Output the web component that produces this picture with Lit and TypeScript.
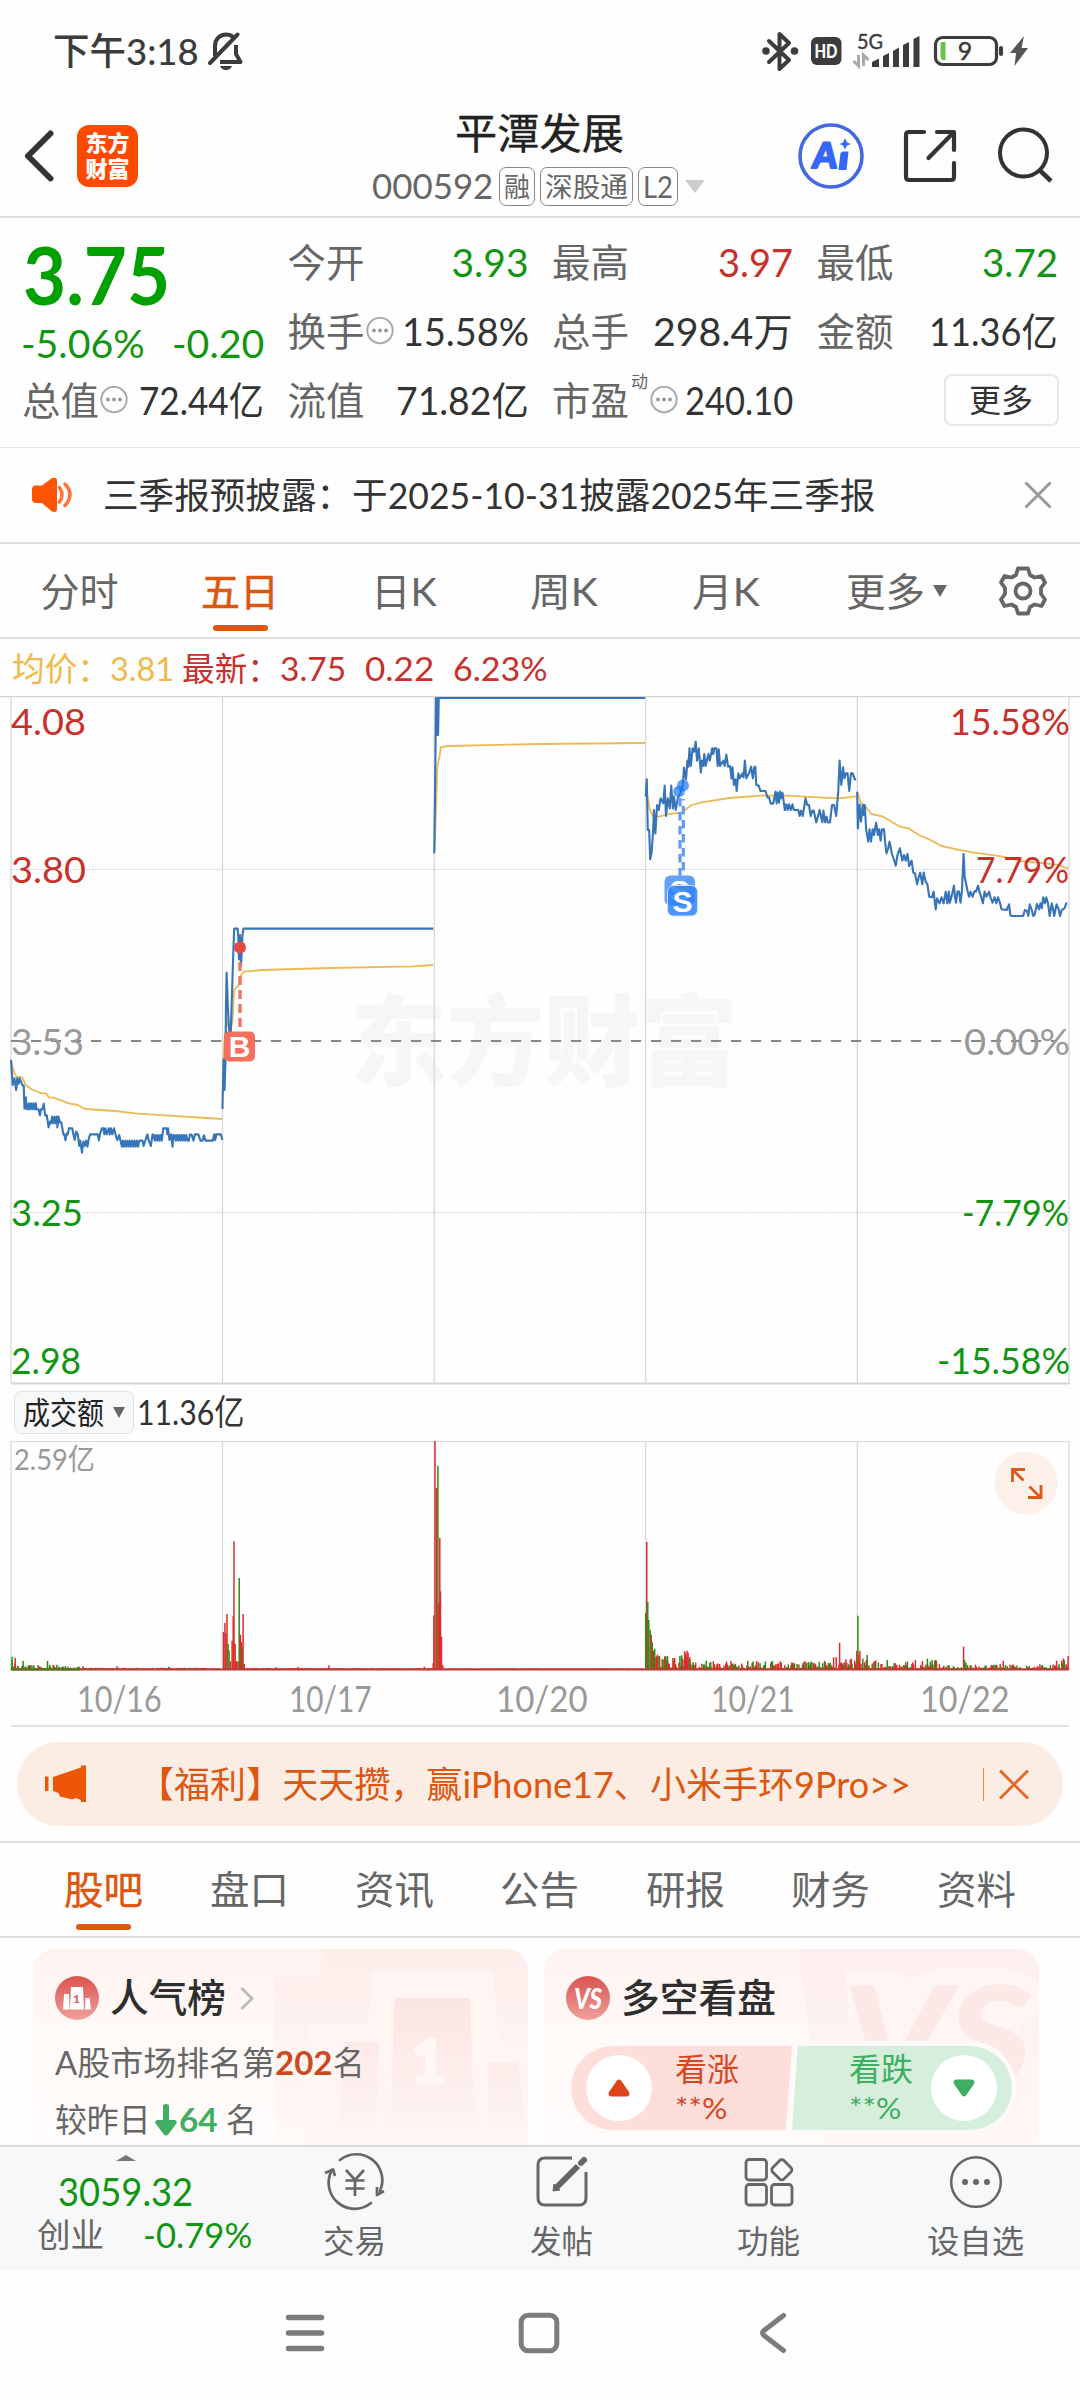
import { LitElement, html, css, svg } from "lit";
import { customElement, property, state } from "lit/decorators.js";
import { classMap } from "lit/directives/class-map.js";

/** One line of text squeezed or stretched horizontally to a given advance width. */
@customElement("fit-text")
class FitText extends LitElement {
  @property({ type: Number }) w = 100;
  @state() private k = 1;
  static styles = css`
    :host { display: inline-block; flex: none; white-space: pre; }
    .box { display: flex; }
    .run { display: inline-block; flex: none; transform-origin: 0 50%; }
  `;
  firstUpdated() {
    const run = this.renderRoot.querySelector(".run") as HTMLElement;
    if (run.offsetWidth) this.k = this.w / run.offsetWidth;
  }
  render() {
    return html`<span class="box" style="width:${this.w}px"><span class="run" style="transform:scaleX(${this.k})"><slot></slot></span></span>`;
  }
}

/* ---------- status bar ---------- */
@customElement("status-bar")
class StatusBar extends LitElement {
  static styles = css`
    :host { display: flex; height: 95px; box-sizing: border-box; padding: 7px 50px 0 53px; align-items: center; color: #3c3c3c; }
    .time { font-size: 37px; line-height: 44px; font-weight: 500; margin-right: 9px; }
    .grow { flex: 1; }
    svg { display: block; flex: none; }
    .t { font-family: Lato, "Liberation Sans", sans-serif; }
  `;
  render() {
    return html`
      <fit-text class="time" w="146">下午3:18</fit-text>
      <svg width="36" height="40" viewBox="0 0 36 40" fill="none" stroke="#3c3c3c" stroke-width="4">
        <path d="M7 25V15C7 8 12 3.500 18 3.500C21 3.500 23.500 4.500 25 6M28 14V23L32.500 31H12" stroke-linejoin="round"/>
        <path d="M2 32L29.500 3.500" stroke-linecap="round"/>
        <path d="M12 35H24C22.500 38.500 20 39 18 39S13.500 38.500 12 35Z" fill="#3c3c3c" stroke="none"/>
      </svg>
      <span class="grow"></span>
      <svg width="270" height="44" viewBox="760 29 270 44" fill="none" stroke="#3c3c3c">
        <path d="M769 41L789 60L779.500 69V34L789 43L769 62" stroke-width="4" stroke-linejoin="round" stroke-linecap="round"/>
        <circle cx="766" cy="51" r="3.800" fill="#3c3c3c" stroke="none"/><circle cx="794.500" cy="51" r="3.800" fill="#3c3c3c" stroke="none"/>
        <rect x="811" y="37" width="30.500" height="28" rx="6" fill="#3c3c3c" stroke="none"/>
        <text class="t" x="814.500" y="57.500" font-size="18" font-weight="900" textLength="23" lengthAdjust="spacingAndGlyphs" fill="#fff" stroke="none">HD</text>
        <text class="t" x="857" y="49" font-size="20.500" textLength="26" lengthAdjust="spacingAndGlyphs" fill="#3c3c3c" stroke="#3c3c3c" stroke-width=".4">5G</text>
        <path d="M858.500 55V66L853.500 61M863.500 66V55L868.500 60" stroke="#aaa" stroke-width="3"/>
        <g fill="#3c3c3c" stroke="none">
          <path d="M872 67V62L879 58.500V67ZM883 67V56L889 53V67ZM893 67V51L899 47.500V67ZM903 67V45L909 42V67ZM913.500 67V39L919.500 36V67Z"/>
          <rect x="999" y="46" width="4" height="10" rx="2"/>
          <path d="M1024 36L1010 53H1016L1014.500 66L1028 48H1021.500Z" fill="#555"/>
        </g>
        <rect x="935.500" y="37.500" width="61" height="27" rx="7" stroke-width="3.200"/>
        <path d="M941 42H945.500V60H943C941.500 60 940.500 58 940.500 56V46C940.500 44 940.500 43 941 42Z" fill="#6cc244" stroke="none"/>
        <text class="t" x="965" y="60" text-anchor="middle" font-size="25" fill="#3c3c3c" stroke="#3c3c3c" stroke-width=".5">9</text>
      </svg>`;
  }
}

/* ---------- title bar ---------- */
@customElement("title-bar")
class TitleBar extends LitElement {
  static styles = css`
    :host { display: grid; grid-template-columns: 372px 332px 1fr; height: 123px; box-sizing: border-box; border-bottom: 2px solid #dcdcdc; }
    .left { display: flex; align-items: center; padding: 0 0 0 24px; gap: 22px; }
    svg { display: block; flex: none; }
    .logo { width: 61px; height: 62px; border-radius: 12px; background: #ff4800; color: #fff; font-weight: 900; font-size: 22px; line-height: 26px; display: flex; flex-direction: column; align-items: center; justify-content: center; }
    .mid { display: flex; flex-direction: column; padding-top: 12px; }
    .name { font-size: 42px; line-height: 52px; color: #222; margin-left: 83px; -webkit-text-stroke: .3px #222; }
    .sub { display: flex; align-items: center; height: 40px; margin-top: 7px; color: #666; }
    .code { font-size: 34px; line-height: 38px; margin-right: 6px; }
    .tag { box-sizing: border-box; height: 39px; border: 1px solid #888; border-radius: 7px; font-size: 27px; line-height: 37px; padding: 0 4px; margin-right: 5px; }
    .tag.latin { font-size: 31px; }
    .tri { width: 0; border: 10px solid transparent; border-top: 13px solid #ccc; border-bottom: 0; margin-left: 2px; }
    .right { display: flex; align-items: center; padding-left: 94px; }
    .t { font-family: "Liberation Sans", Arial, sans-serif; }
  `;
  render() {
    return html`
      <div class="left">
        <svg width="31" height="54" viewBox="0 0 31 54" fill="none" stroke="#333" stroke-width="6" stroke-linecap="round" stroke-linejoin="round"><path d="M26.500 4.500L4 27L26.500 49.500"/></svg>
        <div class="logo"><fit-text w="44">东方</fit-text><fit-text w="44">财富</fit-text></div>
      </div>
      <div class="mid">
        <fit-text class="name" w="169">平潭发展</fit-text>
        <div class="sub">
          <fit-text class="code" w="121">000592</fit-text>
          <span class="tag"><fit-text w="26">融</fit-text></span>
          <span class="tag"><fit-text w="83">深股通</fit-text></span>
          <span class="tag latin"><fit-text w="30">L2</fit-text></span>
          <span class="tri"></span>
        </div>
      </div>
      <div class="right">
        <svg width="270" height="70" viewBox="798 121 270 70" fill="none" stroke="#333">
          <circle cx="831" cy="156" r="31" stroke="#4468e0" stroke-width="3.600"/>
          <text class="t" transform="translate(810.500 168) skewX(-6)" font-size="37" font-weight="700" fill="#3767f6" stroke="#3767f6" stroke-width="2" stroke-linejoin="round">A</text>
          <path d="M842.500 151.500H848.500L846.500 170H838.500L840.500 153Z" fill="#3767f6" stroke="none"/>
          <path d="M845 138L847 142.500L851 144L847 145.500L845 149.500L843 145.500L839.500 144L843 142.500Z" fill="#3767f6" stroke="none"/>
          <path d="M924 132H909Q906 132 906 135V177Q906 180 909 180H951Q954 180 954 177V163" stroke-width="4.200" stroke-linecap="round"/>
          <path d="M937 132H954V150M953 133L928.500 158" stroke-width="4.200" stroke-linecap="round" stroke-linejoin="round"/>
          <circle cx="1023.500" cy="153" r="23.500" stroke-width="4"/>
          <path d="M1040 170.500L1051 181" stroke-width="4.500"/>
        </svg>
      </div>`;
  }
}

/* ---------- quote statistics ---------- */
interface Stat { k: string; v: string; w: number; tone?: string; info?: boolean; sup?: string; }
@customElement("quote-stats")
class QuoteStats extends LitElement {
  static styles = css`
    :host { display: grid; grid-template-columns: 242px 241px 241px 241px; column-gap: 23.500px; grid-template-rows: 69px 69px 69px; height: 230px; box-sizing: border-box; padding: 9.500px 22px 0 22px; border-bottom: 1px solid #e6e6e6; color: #333; }
    .price { grid-row: 1 / span 2; display: flex; flex-direction: column; color: #00a000; }
    .last { font-size: 81px; font-weight: 700; line-height: 92px; margin-left: 1px; }
    .chg { display: flex; justify-content: space-between; font-size: 38px; line-height: 46px; color: #129512; margin-left: -1px; }
    .cell { display: flex; align-items: center; font-size: 39px; line-height: 60px; }
    .key { color: #666; font-size: 38.500px; }
    .val { margin-left: auto; }
    .sup { font-size: 17px; line-height: 20px; color: #666; align-self: flex-start; margin: 6px 2px 0 2px; }
    .info { margin-left: 1px; }
    .sup + .info { margin-left: 0; }
    .up { color: #c9302c; } .down { color: #129512; }
    .more { justify-self: end; align-self: center; margin-right: -1px; width: 115px; height: 52px; box-sizing: border-box; border: 2px solid #e7e7e7; border-radius: 8px; font-size: 32px; line-height: 47px; display: flex; justify-content: center; }
  `;
  private cells: Stat[] = [
    { k: "今开", v: "3.93", w: 77, tone: "down" }, { k: "最高", v: "3.97", w: 75, tone: "up" }, { k: "最低", v: "3.72", w: 76, tone: "down" },
    { k: "换手", v: "15.58%", w: 127, info: true }, { k: "总手", v: "298.4万", w: 140 }, { k: "金额", v: "11.36亿", w: 129 },
    { k: "总值", v: "72.44亿", w: 125, info: true }, { k: "流值", v: "71.82亿", w: 133 }, { k: "市盈", v: "240.10", w: 108, info: true, sup: "动" },
  ];
  render() {
    return html`
      <div class="price">
        <fit-text class="last" w="147">3.75</fit-text>
        <div class="chg"><fit-text w="124">-5.06%</fit-text><fit-text w="92">-0.20</fit-text></div>
      </div>
      ${this.cells.map((c) => html`
        <div class="cell">
          <fit-text class="key" w="77">${c.k}</fit-text>
          ${c.sup ? html`<fit-text class="sup" w="17">${c.sup}</fit-text>` : ""}
          ${c.info ? html`<svg class="info" width="28" height="28" viewBox="0 0 28 28"><circle cx="14" cy="13.500" r="12.700" fill="none" stroke="#aaa" stroke-width="2"/><g fill="#999"><circle cx="8" cy="13.500" r="1.900"/><circle cx="14" cy="13.500" r="1.900"/><circle cx="20" cy="13.500" r="1.900"/></g></svg>` : ""}
          <fit-text class="val ${c.tone ?? ""}" w=${c.w}>${c.v}</fit-text>
        </div>`)}
      <div class="more"><fit-text w="64">更多</fit-text></div>`;
  }
}

@customElement("notice-bar")
class NoticeBar extends LitElement {
  static styles = css`
    :host { display: flex; align-items: center; height: 96px; box-sizing: border-box; border-bottom: 2px solid #dcdcdc; padding: 0 28px 0 31px; color: #333; }
    .txt { font-size: 36px; line-height: 50px; margin-left: 30px; flex: 1; }
  `;
  render() {
    return html`
      <svg width="42" height="36" viewBox="31 477 42 36"><path d="M36 485.500H42L52 478Q57 476.500 57 481V509Q57 513 52 511.500L42 503H36Q32 503 32 499V489.500Q32 485.500 36 485.500Z" fill="#ff5500"/><path d="M59.500 487.500Q64.500 494.500 59.500 502M65 484Q75 494.500 65 505.500" fill="none" stroke="#ff7433" stroke-width="3.500" stroke-linecap="round"/></svg>
      <fit-text class="txt" w="772">三季报预披露：于2025-10-31披露2025年三季报</fit-text>
      <svg width="28" height="28" viewBox="0 0 28 28" stroke="#999" stroke-width="3"><path d="M1.500 1.500L26.500 26.500M26.500 1.500L1.500 26.500"/></svg>`;
  }
}

@customElement("period-tabs")
class PeriodTabs extends LitElement {
  static styles = css`
    :host { display: grid; grid-template-columns: 159px 162px 165px 155px 169px 149px 121px; height: 95px; box-sizing: border-box; border-bottom: 2px solid #dcdcdc; color: #666; font-size: 39px; line-height: 60px; }
    .tab { display: flex; flex-direction: column; align-items: center; padding-top: 17px; }
    .on { color: #dc560f; -webkit-text-stroke: .6px #dc560f; }
    .on::after { content: ""; width: 55px; height: 6px; border-radius: 3px; background: #dc560f; margin-top: 4px; }
    .more { flex-direction: row; align-items: flex-start; justify-content: center; gap: 8px; padding-left: 23px; }
    .tri { border: 7px solid transparent; border-top: 12px solid #666; border-bottom: 0; margin-top: 24px; }
    .gear { display: flex; padding: 21px 0 0 39px; }
  `;
  private tabs = [["分时", 78], ["五日", 78], ["日K", 66], ["周K", 68], ["月K", 68]] as const;
  @state() private active = "五日";
  render() {
    return html`
      ${this.tabs.map(([t, w]) => html`<div class=${classMap({ tab: true, on: t === this.active })} @click=${() => (this.active = t)}><fit-text w=${w}>${t}</fit-text></div>`)}
      <div class="tab more"><fit-text w="79">更多</fit-text><span class="tri"></span></div>
      <div class="gear"><svg width="50" height="52" viewBox="-25 -26 50 52" fill="none" stroke="#666" stroke-width="3.800" stroke-linejoin="round">
        <path d="M-5 -22.500H5L7 -16L11.500 -13.500L18.500 -15L22 -8.500L18 -3V3L22 8.500L18.500 15L11.500 13.500L7 16L5 22.500H-5L-7 16L-11.500 13.500L-18.500 15L-22 8.500L-18 3V-3L-22 -8.500L-18.500 -15L-11.500 -13.500L-7 -16Z"/><circle r="7.500"/></svg></div>`;
  }
}

/* ---------- chart data (sampled on a 2.904 x 3 grid per pixel) ---------- */
const zig = (x0: number, x1: number, a: number, b: number, step = 3.4) => {
  let s = "";
  for (let x = x0, i = 0; x < x1; x += step, i++) s += ` ${x.toFixed(1)},${i % 2 ? a : b}`;
  return s;
};
const DAY1 = "32,1110 37,1185 42,1165 47,1200 50,1165 54,1182 57,1165 66,1187 69,1187 71,1256 75,1222 77,1256" + zig(80, 104, 1240, 1258) +
  " 106,1258 112,1258 116,1276 119,1258 123,1258 127,1241 131,1276 136,1276 141,1312 145,1295" + zig(148, 170, 1280, 1300) + " 166,1312 170,1280 174,1297 178,1297 184,1333 187,1333 190,1351 194,1330 197,1333 200,1315 210,1315 213,1333 217,1350 221,1325 226,1333 230,1368 233,1352 238,1388 242,1355 246,1368 250,1352 254,1370 258,1345 262,1333 280,1333 284,1333 287,1351 291,1330 296,1315 300,1315 303,1333 306,1315 310,1333 316,1315 319,1333 322,1315 326,1333 331,1315 337,1340 341,1350 346,1335 350,1352 354,1370" +
  zig(357, 405, 1370, 1352) + " 405,1352 414,1352 417,1368 422,1352 428,1333 432,1352 438,1368 443,1333" + zig(446, 472, 1352, 1335) + " 474,1315 484,1315 486,1333 488,1315 492,1350 497,1333 501,1370 504,1335" + zig(507, 546, 1352, 1335) +
  " 548,1352 552,1333 557,1335 562,1352 566,1333 576,1333 582,1352 588,1352 592,1336 597,1352 618,1352 622,1333 625,1350 628,1333 641,1333 646,1350";
const DAY2 = "646,1257 649,1108 652,1200 655,1100 656,960 658,848 662,960 666,1030 670,1030 674,900 677,800 680,716 690,716 692,740 694,808 697,735 700,825 704,735 707,716 1258,716";
const DAY3 = "1261,490 1264,240 1266,24 1269,60 1270,135 1271,24 1272,135 1274,24 1873,24";
const DAY4 = "307,320 310,268 313,420 317,420 320,508 324,488 328,430 331,360 335,430 340,345 345,360 350,325 358,340 362,287 366,378 371,325 377,355 381,287 386,355 389,320 394,360 400,325 407,310 415,285 418,233 424,268 428,212 431,230 434,175 438,228 443,175 448,185 452,155 456,212 461,175 467,247 470,212 474,228 477,192 481,228 485,210 489,192 493,212 500,175 503,192 506,175 512,175 516,228 519,178 523,228 532,212 536,228 541,194 546,230 552,228 556,265 559,232 563,285 568,268 571,303 576,250 580,265 588,250 591,262 595,212 599,265 607,250 613,230 618,265 622,232 625,230 628,285 635,287 640,303 655,303 660,322 665,322 670,341 677,341 684,305 687,340 690,308 694,338 697,305 700,325 704,308 711,360 715,343 719,360 723,343 728,360 733,343 737,360 750,360 754,378 758,362 763,378 767,350 771,325 776,345 781,345 786,378 791,362 795,362 802,397 807,380 812,360 816,380 820,397 823,362 828,397 832,380 836,397 842,397 848,345 854,345 860,378 866,305 870,212 875,285 880,232 884,265 888,250 893,250 898,303 903,250 908,250 914,268 918,268";
const DAY5 = "921,305 923,415 928,343 932,395 937,345 940,375 943,345 947,418 953,455 957,418 961,455 966,418 970,435 976,398 981,435 985,418 989,452 993,418 999,418 1002,455 1006,490 1011,475 1015,455 1022,492 1028,510 1033,527 1038,495 1045,475 1052,512 1057,495 1062,512 1067,492 1072,528 1079,512 1084,548 1089,550 1095,583 1100,560 1104,548 1110,583 1114,548 1120,575 1125,583 1130,620 1138,622 1143,605 1149,658 1153,625 1160,640 1166,622 1172,640 1178,605 1183,640 1187,605 1190,638 1195,620 1202,587 1205,622 1208,638 1212,605 1217,605 1221,638 1225,605 1230,492 1233,560 1238,585 1242,605 1246,620 1250,605 1256,620 1262,603 1266,605 1272,587 1276,605 1281,620 1286,640 1291,605 1296,620 1304,605 1308,622 1314,638 1320,622 1325,640 1330,622 1336,640 1340,658 1355,660 1362,643 1366,676 1370,678 1403,678 1408,660 1414,662 1418,678 1422,643 1428,660 1432,678 1436,675 1443,642 1449,658 1453,640 1457,655 1461,622 1466,640 1470,622 1475,640 1480,678 1486,640 1490,658 1493,678 1500,643 1506,658 1510,678 1515,660 1523,655 1528,640 1531,640";
const AVG_L = [
  "32,1110 37,1135 47,1160 64,1162 75,1185 90,1197 120,1210 133,1210 142,1222 155,1223 200,1240 225,1245 248,1257 335,1263 400,1271 645,1287",
  "649,1110 652,1050 660,990 668,1030 675,995 680,900 694,885 700,855 709,845 760,840 960,834 1200,829 1258,825",
  "1262,480 1270,230 1276,200 1280,172 1300,168 1568,162 1873,159",
];
const AVG_R = [
  "309,300 318,355 327,378 345,380 375,372 410,368 425,357 440,345 470,337 550,324 640,317 720,317 820,323 870,325 919,319",
  "921,305 930,335 945,350 962,372 997,380 1045,410 1070,415 1100,435 1130,448 1165,468 1210,478 1260,488 1340,499 1400,513 1500,524 1533,535",
];
const COLS = [11, 222.5, 434.3, 645.6, 857.3, 1069];

@customElement("price-chart")
class PriceChart extends LitElement {
  static styles = css`
    :host { display: block; }
    .legend { display: flex; height: 57px; align-items: center; padding-left: 12px; font-size: 33px; line-height: 44px; color: #c9302c; }
    .avg { color: #efba48; }
    .g2 { margin-left: 8px; } .g3 { margin-left: 19px; }
    svg { display: block; }
    polyline { fill: none; vector-effect: non-scaling-stroke; stroke-linejoin: round; }
    .px { stroke: #3874b8; stroke-width: 2.1px; }
    .mean { stroke: #edb955; stroke-width: 1.800px; }
    .lbl { font-family: Lato, "Liberation Sans", sans-serif; font-size: 37.500px; }
    .up { fill: #c9302c; } .dn { fill: #129512; } .mid { fill: #999; }
    .wm { font-family: "Noto Sans CJK SC", sans-serif; font-weight: 900; font-size: 99px; fill: #f6f6f6; }
    .mk { font-family: "Liberation Sans", sans-serif; font-weight: 700; font-size: 30px; fill: #fff; text-anchor: middle; }
  `;
  private labels: [string, number, number, number, string][] = [
    ["4.08", 11, 735, 75, "up"], ["3.80", 11, 883, 75, "up"], ["3.53", 11, 1055, 73, "mid"], ["3.25", 11, 1226, 72, "dn"], ["2.98", 11, 1374, 70, "dn"],
    ["15.58%", 950, 735, 120, "up"], ["7.79%", 976, 883, 93, "up"], ["0.00%", 964, 1055, 106, "mid"], ["-7.79%", 962, 1226, 107, "dn"], ["-15.58%", 937, 1374, 133, "dn"],
  ];
  render() {
    return html`
      <div class="legend">
        <fit-text class="avg" w="98">均价：</fit-text><fit-text class="avg" w="64">3.81</fit-text>
        <fit-text class="g2" w="98">最新：</fit-text><fit-text w="66">3.75</fit-text>
        <fit-text class="g3" w="69">0.22</fit-text><fit-text class="g3" w="95">6.23%</fit-text>
      </div>
      <svg width="1080" height="690" viewBox="0 696 1080 690">
        <text class="wm" x="350" y="1078" textLength="388" lengthAdjust="spacingAndGlyphs">东方财富</text>
        <path d="M0 696.500H1080" stroke="#d4d4d4" stroke-width="1.500"/>
        <path d="M11 1383.500H1070" stroke="#d4d4d4" stroke-width="2"/>
        ${COLS.map((x) => svg`<path d="M${x} 697V1383" stroke="#d8d8d8" stroke-width="1.300"/>`)}
        <path d="M11 869.500H1069M11 1212.500H1069" stroke="#d0d0d0" stroke-width="1" stroke-dasharray="1.500 1.200"/>
        <path d="M11 1041H1057" stroke="#888" stroke-width="2" stroke-dasharray="10.200 9.800"/>
        <g transform="translate(0 690) scale(.34439 .33333)">
          ${AVG_L.map((p) => svg`<polyline class="mean" points=${p} />`)}
          ${[DAY1, DAY2, DAY3].map((p) => svg`<polyline class="px" points=${p} />`)}
        </g>
        <g transform="translate(540 690) scale(.34439 .33333)">
          ${AVG_R.map((p) => svg`<polyline class="mean" points=${p} />`)}
          ${[DAY4, DAY5].map((p) => svg`<polyline class="px" points=${p} />`)}
        </g>
        ${this.labels.map(([t, x, y, w, c]) => svg`<text class="lbl ${c}" x=${x} y=${y} textLength=${w} lengthAdjust="spacingAndGlyphs">${t}</text>`)}
        <circle cx="240" cy="947.500" r="6" fill="#e4483e"/>
        <path d="M240 962V1027" stroke="#f07462" stroke-width="3.400" stroke-dasharray="9 5"/>
        <rect x="224" y="1031.500" width="31" height="30" rx="5" fill="#f5705f"/>
        <text class="mk" x="239.500" y="1057" >B</text>
        <g fill="#1a75f5" fill-opacity=".7"><circle cx="679" cy="791.500" r="5.800"/><circle cx="683" cy="785.500" r="6"/></g>
        <path d="M680 798V876" stroke="#5f9df5" stroke-width="3.200" stroke-dasharray="8.500 5.500"/>
        <path d="M683.300 799V876" stroke="#5f9df5" stroke-width="3.200" stroke-dasharray="8.500 5.500" stroke-dashoffset="7"/>
        <rect x="664.500" y="875.500" width="30.500" height="30" rx="6" fill="#62a0f7"/>
        <text class="mk" x="679.500" y="901">S</text>
        <rect x="667.500" y="885.500" width="30" height="30.500" rx="6" fill="#2f83f8" fill-opacity=".85" stroke="#cfe2fd" stroke-width="1"/>
        <text class="mk" x="682.500" y="912">S</text>
      </svg>`;
  }
}

/* ---------- turnover bars ---------- */
type Bar = [number, number, "r" | "g"];
const BARS: Bar[] = (() => {
  const out: Bar[] = [];
  let seed = 29;
  const rnd = () => ((seed = (seed * 16807) % 2147483647) / 2147483647);
  const noise = (x0: number, x1: number, amp: (x: number) => number, red = 0.55) => {
    for (let x = x0; x < x1; x += 2.56) out.push([x, 4 + amp(x) * Math.pow(rnd(), 1.8), rnd() < red ? "r" : "g"]);
  };
  noise(33, 85, (x) => 32 - (x - 33) * 0.35, 0.3);
  noise(85, 245, () => 12, 0.45);
  noise(245, 640, () => 3, 0.7);
  noise(712, 1255, () => 2, 1);
  noise(1290, 1870, () => 1, 1);
  noise(1905, 1990, () => 44, 0.55);
  noise(1975, 2010, () => 52, 0.6);
  noise(2010, 2400, () => 24, 0.55);
  noise(2400, 2485, () => 36, 0.6);
  noise(2495, 2530, (x) => 56 - (x - 2495) * 0.7, 0.5);
  noise(2530, 2720, () => 27, 0.55);
  noise(2720, 3060, () => 14, 0.55);
  noise(3060, 3102, () => 32, 0.6);
  out.push(
    [35, 40, "g"], [44, 37, "r"], [67, 27, "g"], [138, 27, "g"], [165, 16, "g"], [340, 11, "r"], [490, 10, "g"],
    [649, 114, "r"], [653, 141, "r"], [656, 110, "r"], [659, 168, "r"], [662, 79, "g"], [665, 59, "g"], [669, 26, "r"], [674, 88, "r"], [677, 161, "r"],
    [679.5, 386, "r"], [683, 79, "r"], [687, 26, "r"], [691, 26, "r"], [694.5, 276, "g"], [698, 106, "r"], [701, 84, "r"], [703, 70, "g"], [706, 168, "r"], [709, 18, "r"],
    [802, 8, "r"], [866, 9, "r"], [955, 14, "r"], [1232, 10, "r"], [1258, 20, "r"],
    [1260, 164, "r"], [1263, 688, "r"], [1267.5, 546, "r"], [1271.5, 613, "g"], [1274, 200, "r"], [1277, 396, "r"], [1279, 236, "r"], [1282, 100, "r"], [1286, 14, "r"],
    [1875, 171, "g"], [1878, 384, "r"], [1881, 204, "g"], [1884, 150, "g"], [1888, 121, "g"], [1891, 106, "r"], [1894, 83, "g"], [1898, 58, "r"], [1901, 64, "g"], [1905, 40, "r"],
    [1909, 46, "r"], [1914, 42, "g"], [1930, 41, "r"], [1954, 36, "r"], [1988, 56, "r"], [1995, 58, "r"], [2003, 38, "r"],
    [2438, 82, "r"], [2472, 34, "r"], [2488, 58, "r"], [2491, 163, "g"], [2494, 45, "r"], [2497, 58, "r"], [2518, 45, "g"], [2693, 34, "g"], [2718, 28, "r"],
    [2798, 70, "r"], [2801, 30, "g"], [2805, 22, "g"], [2913, 28, "r"], [3068, 28, "r"], [3101.5, 42, "r"],
  );
  return out;
})();

@customElement("volume-chart")
class VolumeChart extends LitElement {
  static styles = css`
    :host { display: block; height: 341px; }
    .head { display: flex; align-items: flex-start; height: 55px; padding: 5px 0 0 14px; box-sizing: border-box; }
    .chip { box-sizing: border-box; width: 120px; height: 43px; border: 1px solid #dfe1e6; border-radius: 7px; background: #f7f8fa; display: flex; align-items: center; padding-left: 8px; color: #222; font-size: 31px; line-height: 40px; }
    .chip fit-text { margin-top: -2px; }
    .tri { border: 6.500px solid transparent; border-top: 11px solid #666; border-bottom: 0; margin-left: 9px; }
    .amt { font-size: 35px; line-height: 40px; color: #333; margin-left: 3px; }
    svg { display: block; }
    .sm { font-family: Lato, "Noto Sans CJK SC", sans-serif; fill: #999; font-size: 29px; }
    .r { stroke: #dd2c2a; } .g { stroke: #2b8a14; }
    .bars path { stroke-width: 1.500px; }
    .dates { display: grid; grid-template-columns: 212px 211px 211px 212px 211px; margin: 0 11px; padding: 3px 0 8px 2px; justify-items: center; color: #999; font-size: 37px; line-height: 44px; border-bottom: 2px solid #e4e4e4; height: 54px; box-sizing: border-box; }
  `;
  render() {
    const px = (x: number) => (x <= 1600 ? x / 2.9037 : 540 + (x - 1568) / 2.9037);
    return html`
      <div class="head"><div class="chip"><fit-text w="81">成交额</fit-text><span class="tri"></span></div><fit-text class="amt" w="107">11.36亿</fit-text></div>
      <svg width="1080" height="232" viewBox="0 1441 1080 232">
        <path d="M11 1441.500H1069" stroke="#dedede" stroke-width="1.200"/>
        ${COLS.map((x) => svg`<path d="M${x} 1441V1670" stroke="#d8d8d8" stroke-width="1.300"/>`)}
        <text class="sm" x="14" y="1470" textLength="81" lengthAdjust="spacingAndGlyphs">2.59亿</text>
        <g class="bars">${BARS.map(([x, h, c]) => svg`<path class=${c} d="M${px(x).toFixed(1)} 1670V${(1670 - h / 3).toFixed(1)}"/>`)}</g>
        <path d="M11 1669.500H1069" stroke="#b93a35" stroke-width="2"/><path d="M11 1669.500H80" stroke="#4c7a1c" stroke-width="2"/>
        <circle cx="1026" cy="1483" r="31.500" fill="#fdf0e9"/>
        <path d="M1012.500 1482V1469.500H1025M1013 1470L1023.500 1480.500M1029.500 1486.500L1040.500 1497.500M1041 1485V1497.500H1028" fill="none" stroke="#d9591a" stroke-width="2.800"/>
      </svg>
      <div class="dates">${["10/16", "10/17", "10/20", "10/21", "10/22"].map((d, i) => html`<fit-text w=${[85, 83, 92, 84, 90][i]}>${d}</fit-text>`)}</div>`;
  }
}

@customElement("promo-banner")
class PromoBanner extends LitElement {
  static styles = css`
    :host { display: flex; align-items: center; height: 84px; box-sizing: border-box; margin: 15px 17px 15px; border-radius: 42px; background: #fcede4; padding: 0 34px 0 27px; color: #dd5710; }
    .txt { font-size: 36px; line-height: 50px; margin-left: 51px; flex: 1; font-weight: 400; }
    .bar { width: 1.500px; height: 33px; background: #e08a5f; margin-right: 15px; }
  `;
  render() {
    return html`
      <svg width="43" height="38" viewBox="44 1766 43 38" fill="#ec5606"><path d="M45 1777.500H48.500V1792H45ZM53 1778L81 1768.500V1766.500H86V1803H81V1801L75.500 1799Q73 1801 70 1800L60 1797.500L58.500 1794L53 1792Z"/></svg>
      <fit-text class="txt" w="773">【福利】天天攒，赢iPhone17、小米手环9Pro>></fit-text>
      <span class="bar"></span>
      <svg width="30" height="31" viewBox="0 0 30 31" stroke="#e4672b" stroke-width="3"><path d="M1 1.500L29 29.500M29 1.500L1 29.500"/></svg>`;
  }
}

@customElement("section-tabs")
class SectionTabs extends LitElement {
  static styles = css`
    :host { display: grid; grid-template-columns: repeat(7, 145.400px); padding-left: 31px; height: 97px; box-sizing: border-box; border-top: 2px solid #dcdcdc; border-bottom: 2px solid #dcdcdc; color: #666; font-size: 39px; line-height: 60px; }
    .tab { display: flex; flex-direction: column; align-items: center; padding-top: 16px; }
    .on { color: #dc560f; -webkit-text-stroke: .4px #dc560f; }
    .on::after { content: ""; width: 55px; height: 6px; border-radius: 3px; background: #e2570c; margin-top: 5px; }
  `;
  @state() private active = "股吧";
  render() {
    return ["股吧", "盘口", "资讯", "公告", "研报", "财务", "资料"].map(
      (t) => html`<div class=${classMap({ tab: true, on: t === this.active })} @click=${() => (this.active = t)}><fit-text w="79">${t}</fit-text></div>`,
    );
  }
}

/* ---------- community cards ---------- */
@customElement("hot-cards")
class HotCards extends LitElement {
  static styles = css`
    :host { display: flex; gap: 16px; padding: 11px 41px 0 33px; height: 207px; box-sizing: border-box; overflow: hidden; }
    .card { position: relative; width: 495px; height: 230px; flex: none; border-radius: 22px; overflow: hidden; background: linear-gradient(#fff3f0, #fffaf8 45%, #fffdfd); }
    .art { position: absolute; inset: 0; }
    .art text { font-family: Lato, "Liberation Sans", sans-serif; font-weight: 900; }
    .in { position: relative; padding: 24px 0 0 22px; color: #666; }
    .title { display: flex; align-items: center; height: 50px; font-size: 39px; line-height: 50px; font-weight: 500; color: #2e2e2e; }
    .title fit-text { margin: -2px 14px 0 11px; }
    .ic { display: block; }
    .ic text { font-family: Lato, "Liberation Sans", sans-serif; font-weight: 900; }
    .row { display: flex; align-items: center; font-size: 32.500px; line-height: 46px; height: 46px; }
    .r1 { margin-top: 17px; } .r2 { margin-top: 11px; }
    .hot { font-weight: 700; color: #c94b22; } .fall { font-weight: 700; color: #3fae62; margin: 0 8px 0 2px; }
    .row svg { margin-left: 4px; }
    .pill { display: flex; margin: 18px 0 0 1px; width: 449px; height: 94px; position: relative; box-sizing: border-box; padding: 5px 4px; border-radius: 47px; background: #fffaf9; }
    .half { display: flex; align-items: center; height: 84px; flex: none; font-size: 32px; line-height: 44px; }
    .bull { width: 221px; background: #fddedb; border-radius: 42px 0 0 42px; color: #d5481f; clip-path: polygon(0 0, 100% 0, 97.200% 100%, 0 100%); padding-left: 15px; box-sizing: border-box; gap: 23px; }
    .bear { width: 220px; background: #d6eedc; border-radius: 0 42px 42px 0; color: #3fae62; clip-path: polygon(2.600% 0, 100% 0, 100% 100%, 0 100%); justify-content: flex-end; padding-right: 15px; box-sizing: border-box; gap: 18px; }
    .disc { width: 66px; height: 66px; border-radius: 50%; background: #fff; display: flex; align-items: center; justify-content: center; flex: none; }
    .txt { display: flex; flex-direction: column; margin-top: -4px; }
    .pct { font-size: 28px; line-height: 34px; }
  `;
  render() {
    return html`
      <section class="card">
        <svg class="art" width="495" height="230" viewBox="33 1949 495 230">
          <defs><linearGradient id="a" x1="0" x2="0" y1="0" y2="1"><stop offset="0" stop-color="#fdeeeb"/><stop offset="1" stop-color="#fff9f7"/></linearGradient>
          <linearGradient id="b" x1="0" x2="0" y1="0" y2="1"><stop offset="0" stop-color="#fbe5e2"/><stop offset="1" stop-color="#fef4f2"/></linearGradient></defs>
          <path d="M274.500 2145V1977H319L322 1949H528V2145Z" fill="url(#a)"/>
          <path d="M303 2145L308 2024H368L373 1971H493L499 2042H528V2145Z" fill="#fff6f3"/>
          <path d="M394.500 1998H470L474.500 2129H390ZM344.500 2042H379L376.500 2129H339ZM488 2063H518L526 2129H488Z" fill="url(#b)"/>
          <text x="411" y="2083" font-size="60" fill="#fff7f5" stroke="#fff7f5" stroke-width="3">1</text>
        </svg>
        <div class="in">
          <div class="title">
            <svg class="ic" width="44" height="44" viewBox="-22 -22 44 44"><defs><linearGradient id="c" x1="0" x2="0" y1="0" y2="1"><stop offset="0" stop-color="#d9534f"/><stop offset="1" stop-color="#f0a09c"/></linearGradient></defs><circle r="22" fill="url(#c)"/><path d="M-13 -4H-8L-7.500 11.500H-14ZM-6 -11H6L7 11.500H-7ZM8.500 0H12.500L14 11.500H8Z" fill="#fff"/><text x="-4" y="4.500" font-size="12" fill="#d9625e">1</text></svg>
            <fit-text w="116">人气榜</fit-text>
            <svg width="14" height="23" viewBox="0 0 14 23" fill="none" stroke="#bbb" stroke-width="2.800"><path d="M1.500 1L12 11.500L1.500 22"/></svg>
          </div>
          <div class="row r1"><fit-text w="220">A股市场排名第</fit-text><fit-text class="hot" w="58">202</fit-text><fit-text w="32">名</fit-text></div>
          <div class="row r2"><fit-text w="96">较昨日</fit-text><svg width="22" height="32" viewBox="0 0 22 32" fill="#3fae62"><path d="M8 2Q8 0 11 0T14 2V16H20Q23 17 21 20L13.500 30Q11 33 8.500 30L1 20Q-1 17 2 16H8Z"/></svg><fit-text class="fall" w="39">64</fit-text><fit-text w="31">名</fit-text></div>
        </div>
      </section>
      <section class="card">
        <svg class="art" width="495" height="230" viewBox="544 1949 495 230">
          <defs><linearGradient id="d" x1="0" x2="0" y1="0" y2="1"><stop offset="0" stop-color="#fdefed"/><stop offset="1" stop-color="#fff8f6"/></linearGradient></defs>
          <path d="M798 1949H1039V2145H825Z" fill="url(#d)"/>
          <path d="M845 1970H895Q905 1972 910 1980Q925 1968 950 1967H1000Q1025 1970 1039 1984V2010L1018 2028Q1025 2050 1010 2090H855Z" fill="#fff5f2"/>
          <text x="842" y="2088" font-size="142" font-style="italic" textLength="190" lengthAdjust="spacingAndGlyphs" fill="#fce9e7">VS</text>
        </svg>
        <div class="in">
          <div class="title">
            <svg class="ic" width="44" height="44" viewBox="-22 -22 44 44"><defs><linearGradient id="e" x1="0" x2="0" y1="0" y2="1"><stop offset="0" stop-color="#d9534f"/><stop offset="1" stop-color="#f0a09c"/></linearGradient></defs><circle r="22" fill="url(#e)"/><text x="-14" y="11" font-size="29" font-style="italic" textLength="28" lengthAdjust="spacingAndGlyphs" fill="#fff">VS</text></svg>
            <fit-text w="155">多空看盘</fit-text>
          </div>
          <div class="pill">
            <div class="half bull"><span class="disc"><svg width="22" height="18" viewBox="0 0 22 18"><path d="M9 1.500Q11 -.500 13 1.500L21 13Q22.500 17 19 17.500H3Q-.500 17 1 13Z" fill="#e0431a"/></svg></span><span class="txt"><fit-text w="64">看涨</fit-text><fit-text class="pct" w="52">**%</fit-text></span></div>
            <div class="half bear"><span class="txt"><fit-text w="64">看跌</fit-text><fit-text class="pct" w="52">**%</fit-text></span><span class="disc"><svg width="22" height="18" viewBox="0 0 22 18"><path d="M9 16.500Q11 18.500 13 16.500L21 5Q22.500 1 19 .500H3Q-.500 1 1 5Z" fill="#3fae62"/></svg></span></div>
          </div>
        </div>
      </section>`;
  }
}

/* ---------- bottom toolbar and system navigation ---------- */
@customElement("bottom-bar")
class BottomBar extends LitElement {
  static styles = css`
    :host { display: grid; grid-template-columns: 251px repeat(4, 207px); height: 125px; box-sizing: border-box; background: #f7f8fa; border-top: 2px solid #d9dadc; color: #666; }
    .index { display: flex; flex-direction: column; align-items: center; padding-top: 8px; }
    .tri { border: 10px solid transparent; border-bottom: 6.500px solid #777; border-top: 0; }
    .num { font-size: 38px; line-height: 44px; color: #129512; margin-top: 8px; }
    .line { display: flex; justify-content: space-between; width: 215px; margin-left: 37px; font-size: 33px; line-height: 36px; margin-top: 3px; align-self: flex-start; }
    .dn { color: #129512; font-size: 35px; }
    .item { display: flex; flex-direction: column; align-items: center; padding-top: 5px; font-size: 32px; line-height: 44px; }
    svg { display: block; margin-bottom: 7px; }
  `;
  render() {
    return html`
      <div class="index"><span class="tri"></span><fit-text class="num" w="135">3059.32</fit-text>
        <div class="line"><fit-text w="67">创业</fit-text><fit-text class="dn" w="109">-0.79%</fit-text></div></div>
      <div class="item"><svg width="62" height="60" viewBox="-31 -30 62 60" fill="none" stroke="#666" stroke-width="2.700">
        <path d="M-15 -22A26 26 0 0 1 25 9M16 21A26 26 0 0 1 -23 -12" stroke-linecap="round"/><path d="M-30 -9L-22 -12.500L-20 -6M29 9L22 13L22 5" stroke-linejoin="round"/>
        <path d="M-9 -12L0 -2L9 -12M0 -2V14M-9.500 -1.500H9.500M-9.500 6.500H9.500"/></svg><fit-text w="63">交易</fit-text></div>
      <div class="item"><svg width="62" height="60" viewBox="-31 -30 62 60" fill="none" stroke="#666" stroke-width="3">
        <path d="M10 -24H-17Q-24 -24 -24 -17V16Q-24 23 -17 23H17Q24 23 24 16V-10" /><path d="M16 -16L-6 6" stroke-width="6"/><path d="M-9 9L-8 2L-2 8Z" fill="#666" stroke-width="1"/><path d="M19 -19L22 -22" stroke-width="6" stroke-linecap="round"/></svg><fit-text w="63">发帖</fit-text></div>
      <div class="item"><svg width="62" height="60" viewBox="-31 -30 62 60" fill="none" stroke="#666" stroke-width="2.800">
        <rect x="-23" y="-22.500" width="20.500" height="20.500" rx="3"/><rect x="-23" y="2.500" width="20.500" height="20.500" rx="3"/><rect x="2.500" y="2.500" width="20.500" height="20.500" rx="3"/><rect x="4.800" y="-20.200" width="16" height="16" rx="3" transform="rotate(45 12.800 -12.200)"/></svg><fit-text w="63">功能</fit-text></div>
      <div class="item"><svg width="62" height="60" viewBox="-31 -30 62 60"><circle r="24.800" fill="none" stroke="#666" stroke-width="2.500"/><g fill="#666"><circle cx="-11" r="3"/><circle r="3"/><circle cx="11" r="3"/></g></svg><fit-text w="97">设自选</fit-text></div>`;
  }
}

@customElement("system-nav")
class SystemNav extends LitElement {
  static styles = css`
    :host { display: flex; justify-content: center; align-items: center; height: 126px; gap: 190px; padding-right: 2px; box-sizing: border-box; }
    svg { display: block; }
  `;
  render() {
    return html`
      <svg width="44" height="44" viewBox="-22 -22 44 44" stroke="#7c7c7c" stroke-width="5.500" stroke-linecap="round"><path d="M-16.500 -15.500H16.500M-16.500 0H16.500M-16.500 15.500H16.500"/></svg>
      <svg width="44" height="44" viewBox="-22 -22 44 44"><rect x="-17.800" y="-17.800" width="35.600" height="35.600" rx="7" fill="none" stroke="#7c7c7c" stroke-width="5"/></svg>
      <svg width="44" height="44" viewBox="-22 -22 44 44" fill="none" stroke="#7c7c7c" stroke-width="5" stroke-linecap="round" stroke-linejoin="round"><path d="M10.500 -17.500L-9 -2.500Q-12 0 -9 2.500L10.500 17.500"/></svg>`;
  }
}

@customElement("app-root")
class AppRoot extends LitElement {
  static styles = css`
    :host { display: flex; flex-direction: column; width: 1080px; height: 2400px; overflow: hidden; background: #fefefe; font-family: Lato, "Noto Sans CJK SC", "Liberation Sans", sans-serif; }
    :host > * { flex: none; }
  `;
  render() {
    return html`
      <status-bar></status-bar><title-bar></title-bar><quote-stats></quote-stats><notice-bar></notice-bar>
      <period-tabs></period-tabs><price-chart></price-chart><volume-chart></volume-chart><promo-banner></promo-banner>
      <section-tabs></section-tabs><hot-cards></hot-cards><bottom-bar></bottom-bar><system-nav></system-nav>`;
  }
}
